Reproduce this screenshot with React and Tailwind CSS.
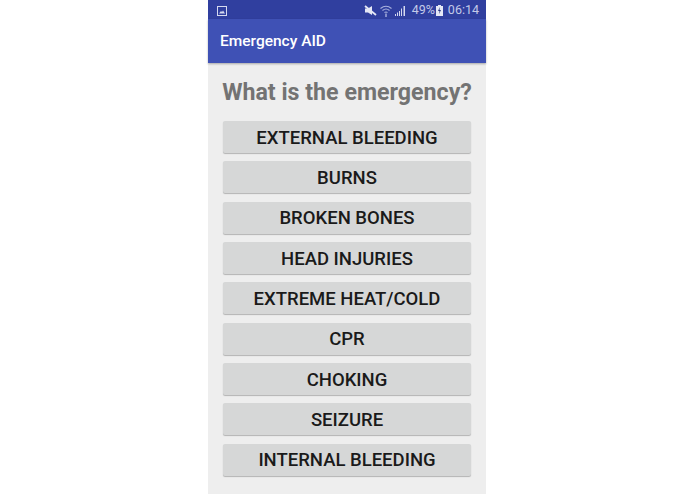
import React from 'react';

const items = [
  'EXTERNAL BLEEDING',
  'BURNS',
  'BROKEN BONES',
  'HEAD INJURIES',
  'EXTREME HEAT/COLD',
  'CPR',
  'CHOKING',
  'SEIZURE',
  'INTERNAL BLEEDING',
];

const StatusBar = () => (
  <div className="h-[19px] pt-[2px] bg-[#303f9f] flex items-center justify-between pl-[9px] pr-[7px] text-[#c3c9e8] text-[12.5px]">
    <svg width="10" height="10" viewBox="0 0 10 10" fill="none">
      <rect x="0.5" y="0.5" width="9" height="9" stroke="#d5d9ef" strokeWidth="1" />
      <path d="M2 7.5 L4 5 L5 6 L6 4.5 L8 7.5 Z" fill="#d5d9ef" />
    </svg>
    <div className="flex items-center">
      <svg width="13" height="11" viewBox="0 0 13 11" className="mr-[3px]">
        <path d="M1 3.5 H4 L8 1 V10 L4 7.5 H1 Z" fill="#e4e7f5" />
        <path d="M1 1 L12 10" stroke="#e4e7f5" strokeWidth="1.8" />
      </svg>
      <svg width="12" height="12" viewBox="0 0 12 12" fill="none" className="mr-[3px]">
        <path d="M0.5 3.5 Q6 -1 11.5 3.5" stroke="#aab2de" strokeWidth="1.1" />
        <path d="M2.5 5.5 Q6 2.5 9.5 5.5" stroke="#aab2de" strokeWidth="1.1" />
        <path d="M4.5 7.5 Q6 6.5 7.5 7.5" stroke="#aab2de" strokeWidth="1.1" />
        <path d="M5.3 8.5 H6.7 V12 H5.3 Z" fill="#aab2de" />
      </svg>
      <svg width="10" height="10" viewBox="0 0 10 10" className="mr-[7px]">
        <path d="M0 8 H1 V10 H0 Z M2 6.5 H3 V10 H2 Z M4 5 H5 V10 H4 Z M6 2.5 H7 V10 H6 Z M8.5 0 H10 V10 H8.5 Z" fill="#d5d9ef" />
      </svg>
      <span>49%</span>
      <svg width="7" height="11" viewBox="0 0 7 11" className="ml-[1px] mr-[5px]">
        <path d="M2 0 H5 V1 H7 V11 H0 V1 H2 Z" fill="#e4e7f5" />
        <path d="M4 2 L2 6 H3.5 L3 9 L5 5 H3.5 Z" fill="#26327f" />
      </svg>
      <span>06:14</span>
    </div>
  </div>
);

const App = () => {
  return (
    <div className="h-[494px] w-[695px] bg-white flex justify-center overflow-hidden font-['Roboto',sans-serif]">
      <div className="w-[278px] h-full bg-[#eeeeee] flex flex-col ml-[-1px]">
        <StatusBar />
        <div className="h-[44px] pt-[2px] bg-[#3f51b5] flex items-center pl-[12px] text-white text-[15.5px] font-medium shadow-[0_1px_2px_rgba(0,0,0,0.3)]">
          Emergency AID
        </div>
        <h1 className="mt-[13px] text-center text-[23.2px] leading-[32px] font-bold text-[#737373]">
          What is the emergency?
        </h1>
        <div className="mt-[13px] px-[15px] flex flex-col gap-[8.35px]">
          {items.map((item) => (
            <button
              key={item}
              className="h-[32px] pt-[3px] bg-[#d6d7d7] rounded-[2px] shadow-[0_1px_1px_rgba(0,0,0,0.25)] text-[#1a1a1a] text-[18.5px] font-medium flex items-center justify-center"
            >
              {item}
            </button>
          ))}
        </div>
      </div>
    </div>
  );
};

export default App;
